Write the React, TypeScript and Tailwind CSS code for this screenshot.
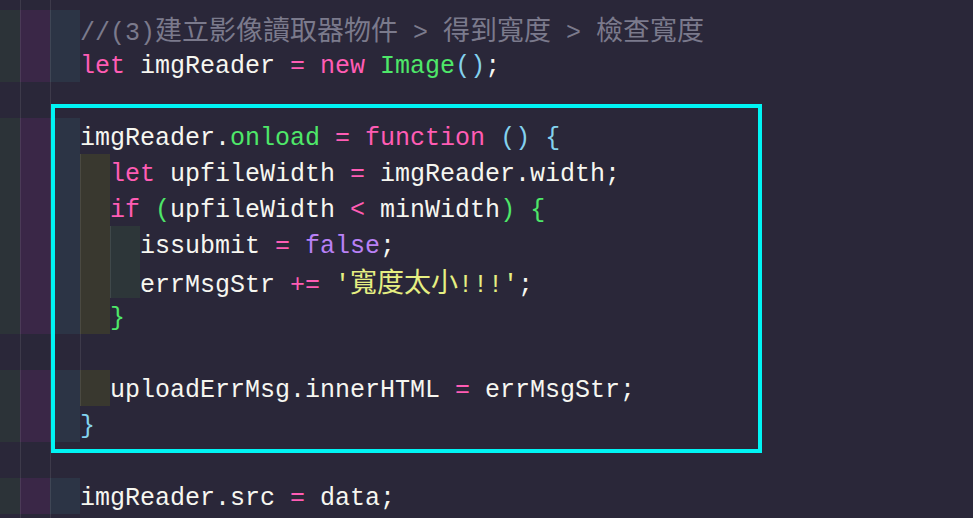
import React from "react";

type Tok = [string, string];

// indent-rainbow block colours, one per nesting level
const LEVELS = [
  "bg-[#2c3338]",
  "bg-[#3a2747]",
  "bg-[#2c3445]",
  "bg-[#39382f]",
  "bg-[#2d3639]",
];

const W = "text-[#f6f6f0]";
const KW = "text-[#ff5cb4]";
const GR = "text-[#4ee869]";
const B1 = "text-[#84d2ee]";
const PU = "text-[#b981f6]";
const ST = "text-[#e6ef82]";
const CM = "text-[#7b7a8c]";

interface Line {
  depth: number; // coloured blocks in front of the text
  guides?: number; // blank rows: how many indent guides to draw
  toks?: Tok[];
}

const lines: Line[] = [
  { depth: 3, toks: [["//(3)建立影像讀取器物件 > 得到寬度 > 檢查寬度", CM]] },
  {
    depth: 3,
    toks: [
      ["let", KW],
      [" imgReader ", W],
      ["=", KW],
      [" ", W],
      ["new", KW],
      [" ", W],
      ["Image", GR],
      ["()", B1],
      [";", W],
    ],
  },
  { depth: 0, guides: 2 },
  {
    depth: 3,
    toks: [
      ["imgReader.", W],
      ["onload", GR],
      [" ", W],
      ["=", KW],
      [" ", W],
      ["function", KW],
      [" ", W],
      ["() {", B1],
    ],
  },
  {
    depth: 4,
    toks: [
      ["let", KW],
      [" upfileWidth ", W],
      ["=", KW],
      [" imgReader.width;", W],
    ],
  },
  {
    depth: 4,
    toks: [
      ["if", KW],
      [" ", W],
      ["(", GR],
      ["upfileWidth ", W],
      ["<", KW],
      [" minWidth", W],
      [") {", GR],
    ],
  },
  {
    depth: 5,
    toks: [
      ["issubmit ", W],
      ["=", KW],
      [" ", W],
      ["false", PU],
      [";", W],
    ],
  },
  {
    depth: 5,
    toks: [
      ["errMsgStr ", W],
      ["+=", KW],
      [" ", W],
      ["'寬度太小!!!'", ST],
      [";", W],
    ],
  },
  { depth: 4, toks: [["}", GR]] },
  { depth: 0, guides: 3 },
  {
    depth: 4,
    toks: [
      ["uploadErrMsg.innerHTML ", W],
      ["=", KW],
      [" errMsgStr;", W],
    ],
  },
  { depth: 3, toks: [["}", B1]] },
  { depth: 0, guides: 2 },
  {
    depth: 3,
    toks: [
      ["imgReader.src ", W],
      ["=", KW],
      [" data;", W],
    ],
  },
];

function renderText(text: string) {
  return text.split(/([\u3400-\u9fff]+)/).map((part, i) =>
    /[\u3400-\u9fff]/.test(part) ? (
      <span
        key={i}
        className="text-[27px] font-['Noto_Sans_CJK_TC','Noto_Sans_CJK_SC',sans-serif]"
      >
        {part}
      </span>
    ) : (
      <span key={i}>{part}</span>
    ),
  );
}

function Gutter({ depth, guides = 0 }: { depth: number; guides?: number }) {
  const count = Math.max(depth, guides + 1);
  return (
    <>
      {Array.from({ length: count }).map((_, i) => (
        <div
          key={i}
          className={`h-full shrink-0 ${i === 0 ? "w-[20px]" : "w-[30px] border-l border-[#ffffff17]"} ${
            i < depth ? LEVELS[i] : ""
          }`}
        />
      ))}
    </>
  );
}

export default function App() {
  return (
    <div className="relative w-[973px] h-[518px] overflow-hidden bg-[#2a2739] font-['Liberation_Mono',monospace] text-[25px] whitespace-pre">
      <div className="flex h-[10px]">
        <Gutter depth={0} guides={2} />
      </div>

      {lines.map((line, i) => (
        <div key={i} className="flex items-center h-[36px] leading-[36px]">
          <Gutter depth={line.depth} guides={line.guides} />
          {line.toks && (
            <span className="mt-[6px] leading-[36px]">
              {line.toks.map(([text, color], j) => (
                <span key={j} className={color}>
                  {renderText(text)}
                </span>
              ))}
            </span>
          )}
        </div>
      ))}

      <div className="flex h-[4px]">
        <Gutter depth={0} guides={2} />
      </div>

      {/* highlight frame drawn over the code */}
      <div className="absolute left-[51px] top-[104px] w-[711px] h-[349px] border-[4px] border-[#00f4f4]" />
    </div>
  );
}
